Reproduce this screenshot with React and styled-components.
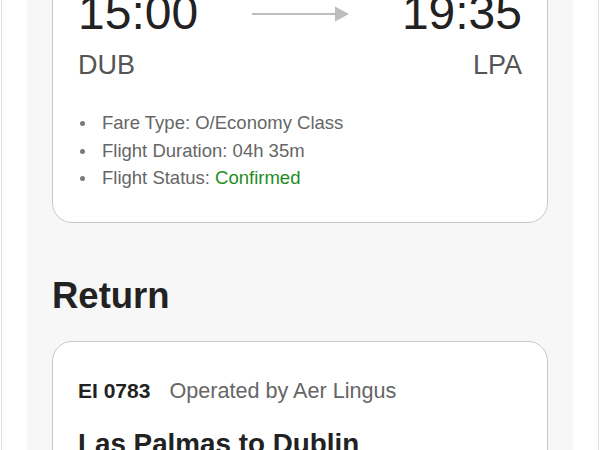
import React from "react";
import styled, { createGlobalStyle } from "styled-components";

const Global = createGlobalStyle`
  html, body {
    margin: 0;
    padding: 0;
    background: #ffffff;
    overflow: hidden;
    font-family: "Liberation Sans", Arial, Helvetica, sans-serif;
  }
`;

const Frame = styled.div`
  margin: -48px 0 0 1px;
  width: 598px;
  min-height: 600px;
  box-sizing: border-box;
  border-left: 1px solid #dedede;
  border-right: 1px solid #dedede;
  padding: 0 25px;
`;

const Panel = styled.main`
  background: #f7f7f7;
  padding: 0 25px 40px;
  min-height: 600px;
`;

const Card = styled.section`
  background: #ffffff;
  border: 1px solid #c9c9c9;
  border-radius: 20px;
  padding: ${(p) => p.$pt || 36}px 25px 30px;
`;

const SectionTitle = styled.h2`
  margin: 52px 0 24px;
  font-size: 36.5px;
  line-height: 42px;
  font-weight: 700;
  color: #222222;
`;

const FlightHead = styled.div`
  display: flex;
  align-items: baseline;
  gap: 19px;
  font-size: 21px;
  line-height: 25px;
`;

const FlightNo = styled.span`
  font-weight: 700;
  color: #222222;
`;

const Operator = styled.span`
  font-size: 21.6px;
  color: #666666;
`;

const Route = styled.h3`
  margin: 24px 0 0;
  font-size: 27.8px;
  line-height: 34px;
  font-weight: 700;
  color: #222222;
`;

const TimesRow = styled.div`
  display: grid;
  grid-template-columns: 1fr auto 1fr;
  align-items: center;
  margin-top: ${(p) => p.$mt || 0}px;
`;

const Time = styled.div`
  font-size: 48px;
  line-height: 48px;
  color: #222222;
  justify-self: ${(p) => (p.$right ? "end" : "start")};
`;

const Arrow = styled.svg`
  display: block;
  width: 97px;
  height: 16px;
  margin-top: 1px;
`;

const CodesRow = styled.div`
  display: flex;
  justify-content: space-between;
  margin-top: 12px;
  font-size: 27px;
  line-height: 32px;
  color: #555555;
`;

const Details = styled.ul`
  list-style: none;
  margin: 28px 0 0;
  padding: 0;
  font-size: 18.5px;
  line-height: 27.5px;
  color: #666666;
`;

const Detail = styled.li`
  display: flex;
  align-items: center;
  &::before {
    content: "";
    width: 5px;
    height: 5px;
    border-radius: 50%;
    background: #7a7a7a;
    margin: 2px 17px 0 2px;
    flex-shrink: 0;
  }
`;

const Status = styled.span`
  color: ${(p) => (p.$ok ? "#1f8c1f" : "#b00020")};
`;

const FlightArrow = () => (
  <Arrow viewBox="0 0 97 16">
    <rect x="0" y="7" width="85" height="2" fill="#bdbdbd" />
    <polygon points="83,0.5 97,8 83,15.5" fill="#bdbdbd" />
  </Arrow>
);

const Leg = ({ dep, arr, from, to, fare, duration, status, mt }) => (
  <>
    <TimesRow $mt={mt}>
      <Time>{dep}</Time>
      <FlightArrow />
      <Time $right>{arr}</Time>
    </TimesRow>
    <CodesRow>
      <span>{from}</span>
      <span>{to}</span>
    </CodesRow>
    <Details>
      <Detail>
        <span>Fare Type: {fare}</span>
      </Detail>
      <Detail>
        <span>Flight Duration: {duration}</span>
      </Detail>
      <Detail>
        <span>
          Flight Status: <Status $ok>{status}</Status>
        </span>
      </Detail>
    </Details>
  </>
);

export default function App() {
  return (
    <>
      <Global />
      <Frame>
        <Panel>
          <Card $pt={36}>
            <Leg
              dep="15:00"
              arr="19:35"
              from="DUB"
              to="LPA"
              fare="O/Economy Class"
              duration="04h 35m"
              status="Confirmed"
            />
          </Card>
          <SectionTitle>Return</SectionTitle>
          <Card>
            <FlightHead>
              <FlightNo>EI 0783</FlightNo>
              <Operator>Operated by Aer Lingus</Operator>
            </FlightHead>
            <Route>Las Palmas to Dublin</Route>
            <Leg
              mt={24}
              dep="20:30"
              arr="00:55"
              from="LPA"
              to="DUB"
              fare="O/Economy Class"
              duration="04h 25m"
              status="Confirmed"
            />
          </Card>
        </Panel>
      </Frame>
    </>
  );
}
